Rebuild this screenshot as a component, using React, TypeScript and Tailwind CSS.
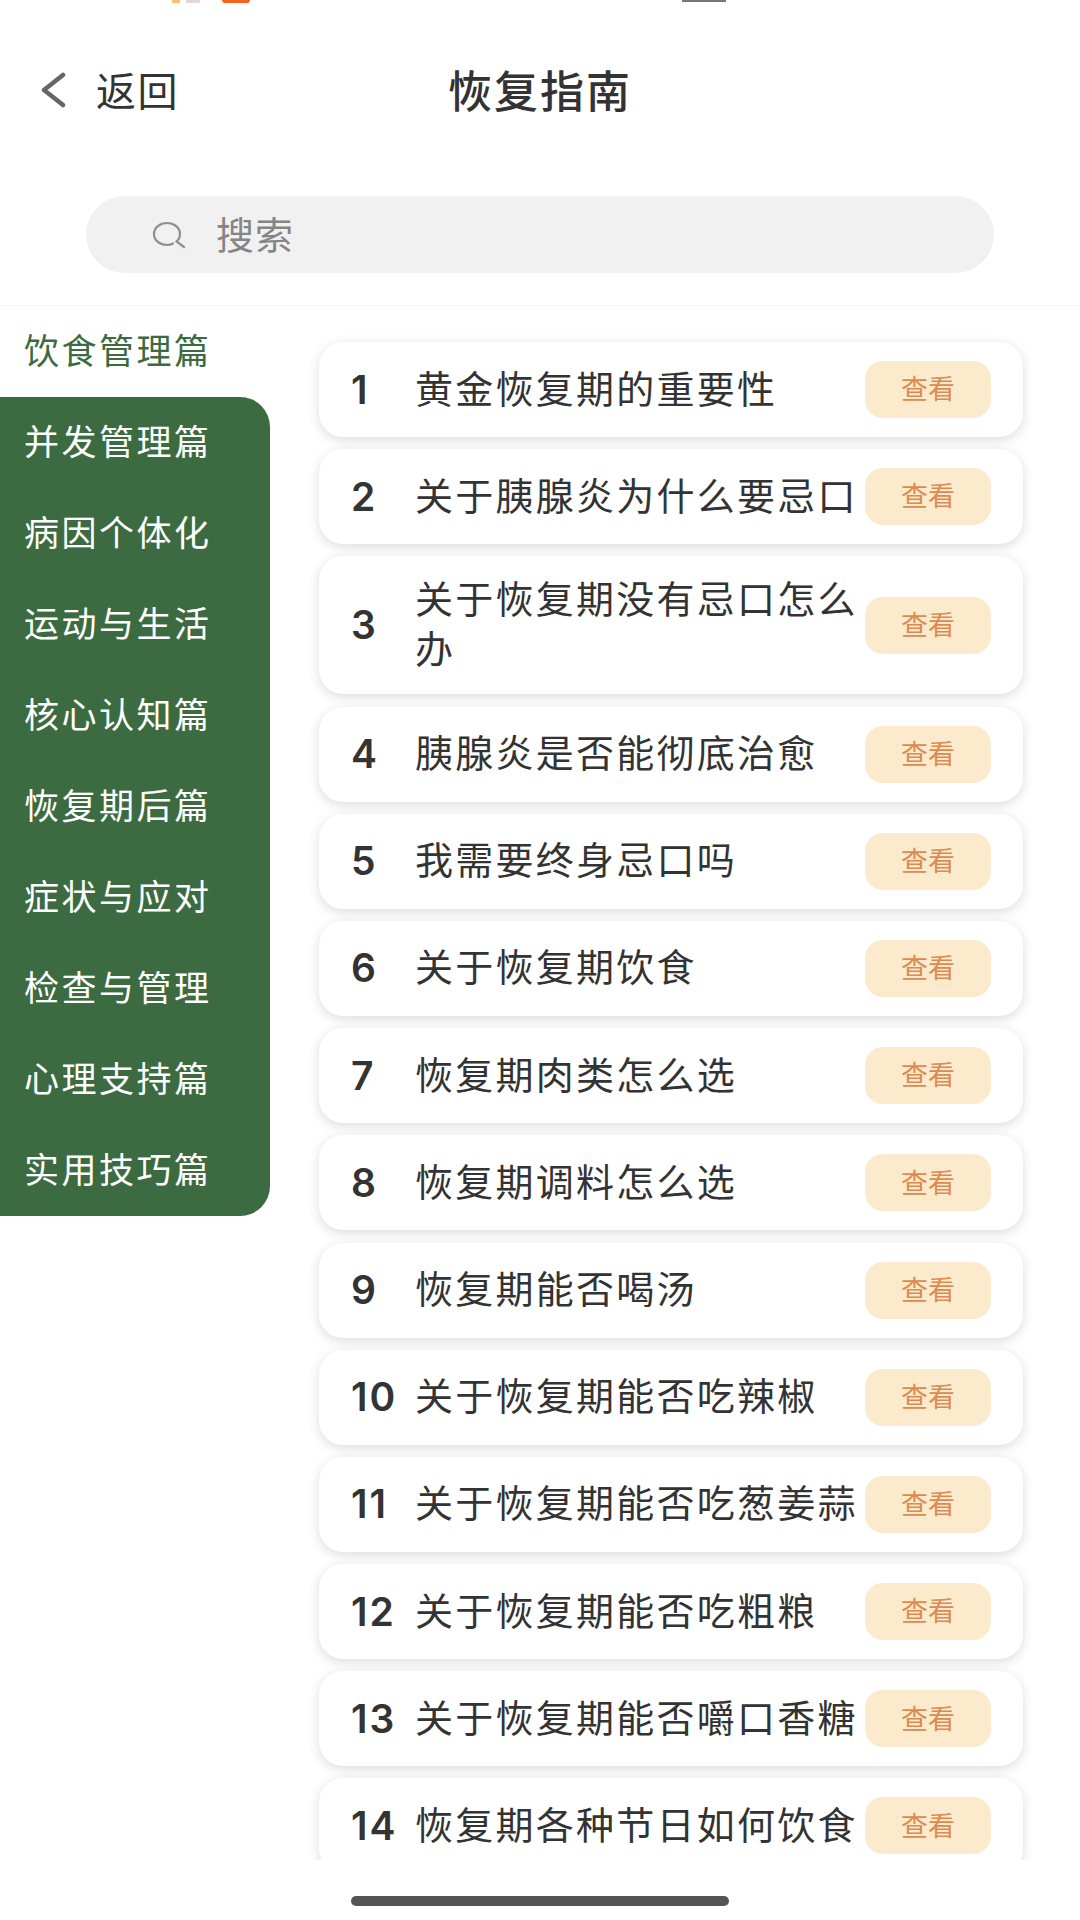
const categories = [
  "饮食管理篇",
  "并发管理篇",
  "病因个体化",
  "运动与生活",
  "核心认知篇",
  "恢复期后篇",
  "症状与应对",
  "检查与管理",
  "心理支持篇",
  "实用技巧篇",
];

const articles = [
  "黄金恢复期的重要性",
  "关于胰腺炎为什么要忌口",
  "关于恢复期没有忌口怎么办",
  "胰腺炎是否能彻底治愈",
  "我需要终身忌口吗",
  "关于恢复期饮食",
  "恢复期肉类怎么选",
  "恢复期调料怎么选",
  "恢复期能否喝汤",
  "关于恢复期能否吃辣椒",
  "关于恢复期能否吃葱姜蒜",
  "关于恢复期能否吃粗粮",
  "关于恢复期能否嚼口香糖",
  "恢复期各种节日如何饮食",
];

const fontStack = "font-['Noto_Sans_CJK_SC','Noto_Sans',sans-serif]";

// what is left of the cropped status bar
const StatusStrip = () => (
  <div className="flex h-[3px] shrink-0 items-start">
    <span className="ml-[172px] h-[3px] w-[8px] bg-[#fbbf6a]" />
    <span className="ml-[6px] h-[3px] w-[14px] bg-[#e8d4e0]" />
    <span className="ml-[22px] h-[3px] w-[28px] rounded-b-full bg-[#f5641e]" />
    <span className="ml-[432px] h-[2px] w-[44px] bg-[#777777]" />
  </div>
);

const ArticleRow = ({ index, title }: { index: number; title: string }) => (
  <div className="flex shrink-0 items-center rounded-[24px] bg-white px-[32px] py-[19px] shadow-[0_3px_12px_rgba(0,0,0,0.14)]">
    <span className="w-[64px] shrink-0 font-['Inter',sans-serif] text-[39px] leading-[50px] font-semibold tracking-[2px] text-[#333333]">
      {index}
    </span>
    <p className="-mt-[3px] w-[450px] shrink-0 pb-[3px] text-[38px] leading-[50px] tracking-[2.25px] text-[#333333]">
      {title}
    </p>
    <button className="flex h-[57px] w-[126px] shrink-0 items-center justify-center rounded-[18px] bg-[#fbebcc] pb-[2px] text-[27px] text-[#dd8a52]">
      查看
    </button>
  </div>
);

export default function App() {
  return (
    <div className={`flex h-[1920px] w-[1080px] flex-col overflow-hidden bg-white ${fontStack}`}>
      <StatusStrip />

      <header className="flex h-[178px] shrink-0 items-center px-[40px] pb-[6px]">
        <div className="flex flex-1 items-center">
          <svg width="26" height="36" viewBox="0 0 26 36" fill="none" className="mt-[2px]">
            <path d="M23 3 L4 18 L23 33" stroke="#666666" strokeWidth="4.5" strokeLinecap="round" strokeLinejoin="round" />
          </svg>
          <span className="ml-[30px] text-[40px] leading-[50px] tracking-[1.5px] text-[#333333]">返回</span>
        </div>
        <h1 className="text-[44px] leading-[54px] font-medium tracking-[2px] text-[#333333]">恢复指南</h1>
        <div className="flex-1" />
      </header>

      <div className="flex h-[125px] shrink-0 items-start border-b border-[#f6f6f6] px-[86px] pt-[15px]">
        <div className="flex h-[77px] w-[908px] items-center rounded-full bg-[#f1f1f1] pl-[66px]">
          <svg width="34" height="28" viewBox="0 0 34 28" fill="none">
            <path
              d="M21 22.5 C19.2 23.5 17.2 24 15 24 C8 24 2 19.5 2 13 C2 6.5 8 2 15 2 C22 2 28 6.5 28 13 C28 16 26.7 18.6 24.5 20.5 L32 26"
              stroke="#8f8f8f"
              strokeWidth="2.2"
              strokeLinecap="round"
            />
          </svg>
          <span className="ml-[30px] pb-[4px] text-[38px] leading-[50px] tracking-[1px] text-[#858585]">搜索</span>
        </div>
      </div>

      <main className="flex min-h-0 flex-1 items-start overflow-hidden">
        <nav className="flex w-[270px] shrink-0 flex-col">
          <div className="flex h-[91px] items-center pb-[4px] pl-[24px] text-[35px] tracking-[2.5px] text-[#3c6b41]">
            {categories[0]}
          </div>
          <div className="flex flex-col rounded-r-[30px] bg-[#3c6b41]">
            {categories.slice(1).map((name) => (
              <div key={name} className="flex h-[91px] items-center pb-[4px] pl-[24px] text-[35px] tracking-[2.5px] text-white">
                {name}
              </div>
            ))}
          </div>
        </nav>

        <section className="ml-[49px] flex w-[704px] flex-col gap-[12.2px] pt-[36px]">
          {articles.map((title, i) => (
            <ArticleRow key={title} index={i + 1} title={title} />
          ))}
        </section>
      </main>

      <footer className="flex h-[60px] shrink-0 items-start justify-center bg-white pt-[36px]">
        <div className="h-[10px] w-[378px] rounded-full bg-[#555555]" />
      </footer>
    </div>
  );
}
